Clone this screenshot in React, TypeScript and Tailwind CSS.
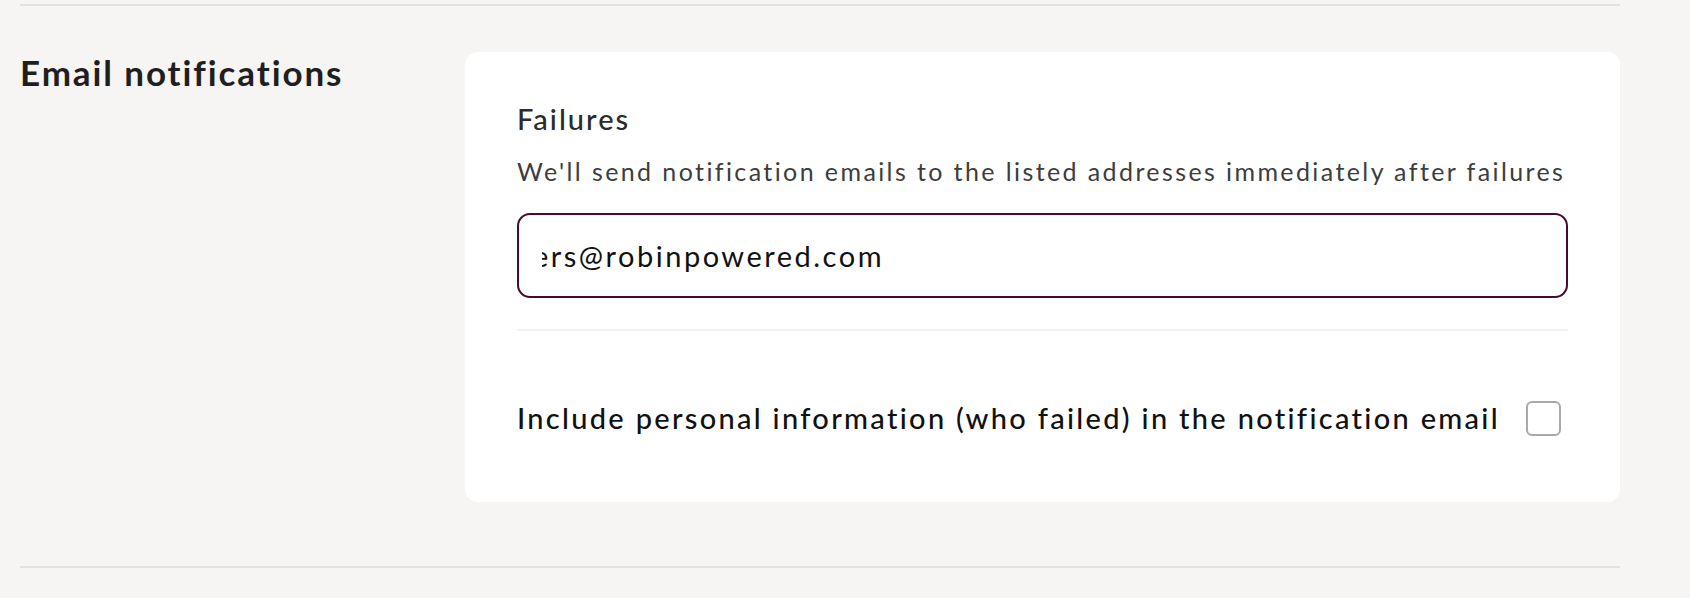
import React from 'react';

const App: React.FC = () => {
  return (
    <div className="min-h-[598px] w-full bg-[#f6f5f3] pt-1 font-['Lato','Noto_Sans',sans-serif]">
      <section className="ml-[20px] w-[1600px] border-t-2 border-b-2 border-[#e2e1dd] pt-[46px] pb-[64px]">
        <div className="flex">
          {/* Left: section title */}
          <div className="w-[445px] shrink-0">
            <h2 className="text-[35px] leading-[40px] font-bold tracking-[1.9px] text-[#1f1f1f]">Email notifications</h2>
          </div>

          {/* Right: settings card */}
          <div className="min-w-0 flex-1 rounded-[13px] bg-white px-[52px] pt-[49px] pb-[66px]">
            <h3 className="text-[29px] leading-[36px] font-medium tracking-[2px] text-[#2b2b2b]">Failures</h3>
            <p className="mt-[18px] whitespace-nowrap text-[25px] leading-[32px] tracking-[2.4px] text-[#3d3d3d]">
              We'll send notification emails to the listed addresses immediately after failures
            </p>

            <div className="mt-[26px] flex h-[85px] items-center rounded-[13px] border-2 border-[#4a0a2e] pl-[23px] pr-[24px]">
              <div className="overflow-hidden whitespace-nowrap">
                <span className="-ml-[9px] block text-[29px] leading-[36px] tracking-[2.5px] text-[#111111]">ers@robinpowered.com</span>
              </div>
            </div>

            <div className="mt-[31px] h-[2px] bg-[#f2f2f2]" />

            <label className="mt-[69px] flex items-center justify-between gap-4">
              <span className="whitespace-nowrap text-[29px] leading-[36px] font-medium tracking-[2.3px] text-[#111111]">
                Include personal information (who failed) in the notification email
              </span>
              <span className="mr-[7px] h-[35px] w-[35px] shrink-0 rounded-[6px] border-[2.5px] border-[#a9a9a9]" />
            </label>
          </div>
        </div>
      </section>
    </div>
  );
};

export default App;
